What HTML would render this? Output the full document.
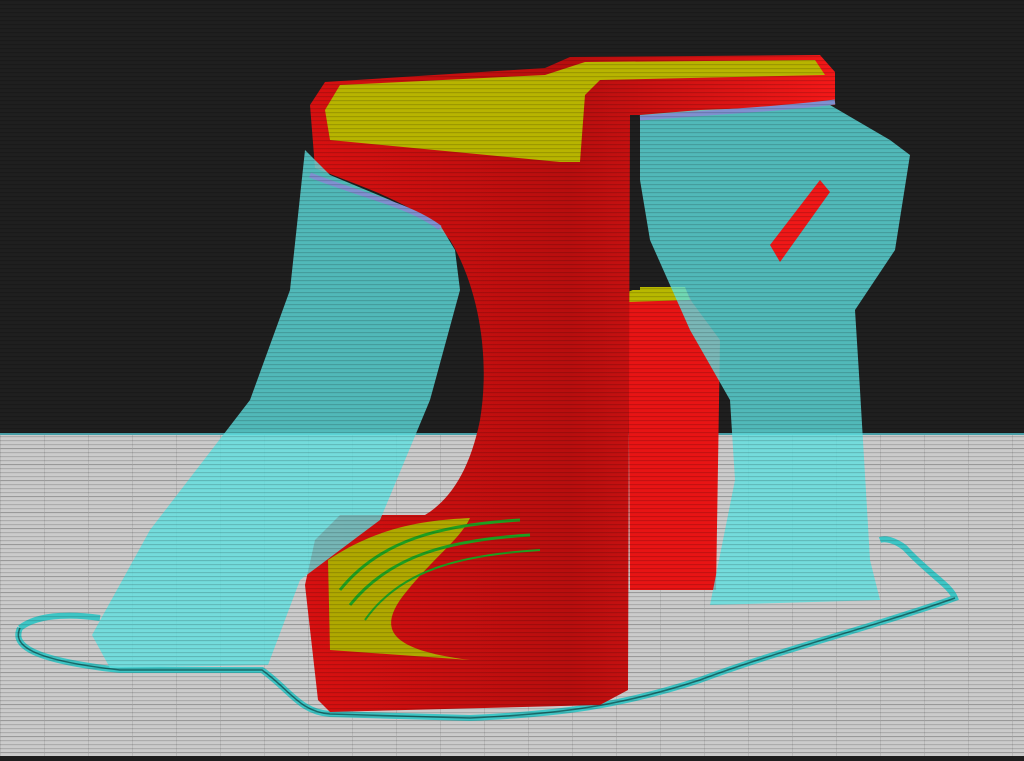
<!DOCTYPE html>
<html><head><style>html,body{margin:0;padding:0;background:#1e1e1e;overflow:hidden}</style></head>
<body>
<svg width="1024" height="756" viewBox="0 0 1024 756" xmlns="http://www.w3.org/2000/svg">
<defs>
<pattern id="hl" width="8" height="4" patternUnits="userSpaceOnUse"><rect width="8" height="1.2" fill="#000" opacity="0.3"/></pattern>
<pattern id="grid" width="44" height="16" patternUnits="userSpaceOnUse"><rect width="44" height="16" fill="#cbcbcb"/><rect width="44" height="1" fill="#b4b4b4"/><rect width="1" height="16" fill="#b8b8b8"/></pattern>
<linearGradient id="rg" x1="0" x2="1"><stop offset="0" stop-color="#d81010"/><stop offset="0.5" stop-color="#b80e0e"/><stop offset="1" stop-color="#f41818"/></linearGradient>
</defs>
<rect width="1024" height="435" fill="#1f1f1f"/>
<rect y="435" width="1024" height="321" fill="url(#grid)"/>
<rect y="433" width="1024" height="2" fill="#4aa0a8"/>
<path d="M20,628 C40,612 80,615 100,618 M20,628 C12,645 30,660 120,670 L262,670 C290,690 300,712 330,714 L470,718 C560,714 620,706 700,680 C780,650 880,625 955,598 C950,585 930,575 905,548 C895,540 885,538 880,540" fill="none" stroke="#3ec6c6" stroke-width="6"/>
<path d="M20,628 C12,645 30,660 120,670 L262,670 C290,690 300,712 330,714 L470,718 C560,714 620,706 700,680 C780,650 880,625 955,598" fill="none" stroke="#1c6a6a" stroke-width="1.5"/>
<polygon points="628,295 640,290 685,288 692,302 720,340 716,590 630,590" fill="#e81414"/>
<polygon points="628,292 640,287 685,287 690,300 628,302" fill="#b8b800"/>
<path d="M310,105 L325,82 L545,68 L570,57 L820,55 L835,72 L835,105 L640,115 L630,115 L628,690 L600,705 L330,712 L318,700 L305,585 L315,540 L340,515 L425,515 C450,500 470,470 480,420 C490,360 480,290 450,240 C420,205 370,190 315,168 Z" fill="url(#rg)"/>
<path d="M328,560 C380,525 430,520 470,518 C460,540 430,560 400,600 C380,630 390,650 470,660 L330,650 Z" fill="#b0a800"/>
<path d="M340,590 C380,540 440,525 520,520" fill="none" stroke="#20a020" stroke-width="3"/>
<path d="M350,605 C390,555 450,540 530,535" fill="none" stroke="#20a020" stroke-width="3"/>
<path d="M365,620 C400,570 460,555 540,550" fill="none" stroke="#20a020" stroke-width="2"/>
<polygon points="325,110 340,85 545,75 585,62 815,60 825,75 600,80 585,95 580,162 560,162 330,140" fill="#b8b400"/>
<polygon points="630,115 640,115 640,290 630,290" fill="#1f1f1f"/>
<polygon points="305,150 330,175 390,200 440,225 455,250 460,290 430,400 380,520 300,580 268,665 110,668 92,635 150,530 250,400 290,290" fill="#5ee0e0" opacity="0.8"/>
<polygon points="640,115 700,110 830,105 890,140 910,155 895,250 855,310 860,390 870,560 880,600 710,605 735,480 730,400 690,330 650,240 640,180" fill="#5ee0e0" opacity="0.8"/>
<polygon points="770,245 820,180 830,192 780,262" fill="#f01818"/>
<path d="M310,175 C360,195 410,205 440,228" stroke="#8090d0" stroke-width="5" fill="none"/>
<path d="M640,118 C720,112 790,108 835,102" stroke="#8090d0" stroke-width="5" fill="none"/>
<rect width="1024" height="756" fill="url(#hl)" opacity="0.5"/>
</svg>
</body></html>
